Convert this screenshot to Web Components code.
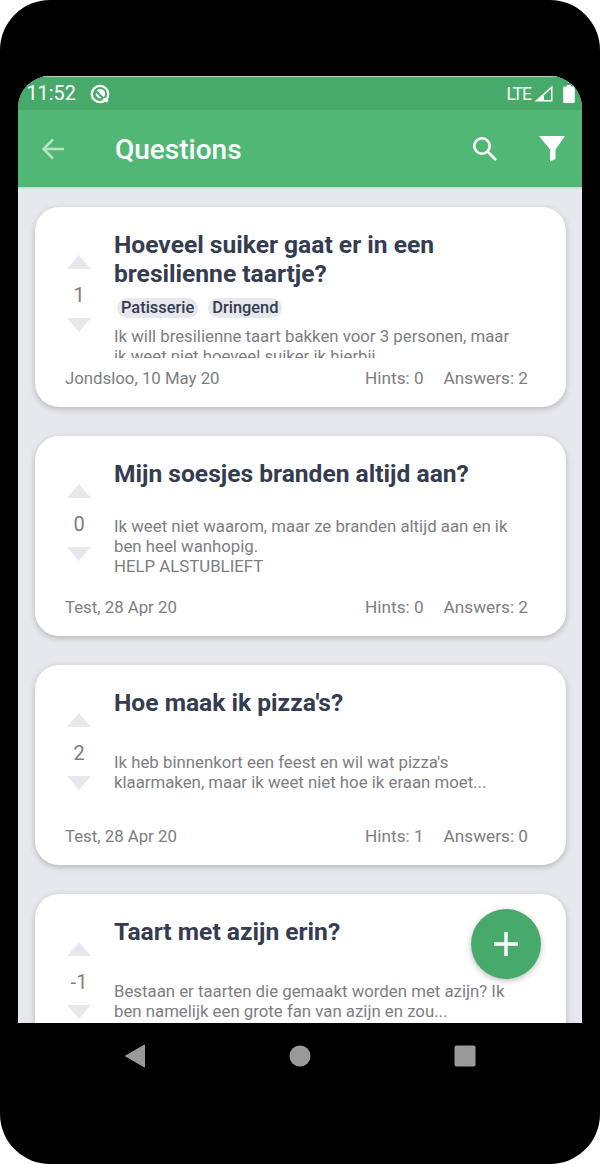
<!DOCTYPE html>
<html>
<head>
<meta charset="utf-8">
<title>Questions</title>
<style>
  html, body { margin: 0; padding: 0; background: #fff; }
  body { font-family: Roboto, "Liberation Sans", sans-serif; }
</style>
</head>
<body>
<phone-frame>
  <status-bar></status-bar>
  <app-bar title="Questions"></app-bar>
  <question-list>
    <question-card votes="1" title="Hoeveel suiker gaat er in een bresilienne taartje?" author="Jondsloo, 10 May 20" hints="0" answers="2">
      <tag-pill slot="tags">Patisserie</tag-pill>
      <tag-pill slot="tags">Dringend</tag-pill>
      Ik will bresilienne taart bakken voor 3 personen, maar ik weet niet hoeveel suiker ik hierbij
    </question-card>
    <question-card votes="0" title="Mijn soesjes branden altijd aan?" author="Test, 28 Apr 20" hints="0" answers="2">
      Ik weet niet waarom, maar ze branden altijd aan en ik ben heel wanhopig.<br>HELP ALSTUBLIEFT
    </question-card>
    <question-card votes="2" title="Hoe maak ik pizza's?" author="Test, 28 Apr 20" hints="1" answers="0" style="--text-shift: 7px">
      Ik heb binnenkort een feest en wil wat pizza's klaarmaken, maar ik weet niet hoe ik eraan moet...
    </question-card>
    <question-card votes="-1" title="Taart met azijn erin?" style="--text-shift: 7px">
      Bestaan er taarten die gemaakt worden met azijn? Ik ben namelijk een grote fan van azijn en zou...
    </question-card>
  </question-list>
  <add-button></add-button>
  <nav-bar slot="nav"></nav-bar>
</phone-frame>

<script>
class PhoneFrame extends HTMLElement {
    constructor() {
        super();
        this.attachShadow({ mode: 'open' });
        this.shadowRoot.innerHTML = `
        <style>
          :host {
            display: block;
            width: 600px;
            height: 1164px;
            box-sizing: border-box;
            padding-top: 76px;
            background: #000;
            border-radius: 50px;
            overflow: hidden;
          }
          .screen {
            position: relative;
            display: flex;
            flex-direction: column;
            width: 564px;
            height: 947px;
            margin: 0 18px;
            background: #e6e8ed;
            border-radius: 32px 32px 0 0;
            overflow: hidden;
          }
        </style>
        <div class="screen"><slot></slot></div>
        <slot name="nav"></slot>
      `;
    }
}

class StatusBar extends HTMLElement {
    constructor() {
        super();
        this.attachShadow({ mode: 'open' });
        this.shadowRoot.innerHTML = `
        <style>
          :host {
            display: flex;
            align-items: center;
            flex: none;
            height: 34px;
            box-sizing: border-box;
            padding: 0 7px 0 8.5px;
            background: #48aa6a;
            border-top: 1px solid #b4d9c0;
            color: #fff;
            font-size: 19.8px;
          }
          .at { margin-left: 14px; }
          .right { margin-left: auto; display: flex; align-items: center; }
          .lte { font-size: 17.5px; letter-spacing: -1px; margin-right: 3px; opacity: .95; }
          svg { display: block; }
        </style>
        <span class="time">11:52</span>
        <svg class="at" width="20" height="20" viewBox="0 0 20 20">
          <circle cx="10" cy="10" r="8.200" fill="none" stroke="#fff" stroke-width="2.300"/>
          <path d="M12 15.500l5 3.300 1.500-3-3.500-2z" fill="#fff"/>
          <path d="M6.800 6.400A4.800 4.800 0 0 1 13.700 13.300z" fill="#fff"/>
          <path d="M5.800 8.400l5.900 5.900A4.800 4.800 0 0 1 5.800 8.400z" fill="#fff"/>
        </svg>
        <div class="right">
          <span class="lte">LTE</span>
          <svg width="19" height="17" viewBox="0 0 19 17">
            <path d="M0.500 16.500L18.500 0.500v16z M10 15h7V4l-7 6.200z" fill="#fff" fill-rule="evenodd"/>
          </svg>
          <svg style="margin-left:10px" width="12" height="18" viewBox="0 0 12 18">
            <path d="M4 0h4v1.500h2.800a1 1 0 0 1 1 1V17a1 1 0 0 1-1 1H1.200a1 1 0 0 1-1-1V2.500a1 1 0 0 1 1-1H4z" fill="#fff"/>
          </svg>
        </div>
      `;
    }
}

class AppBar extends HTMLElement {
    constructor() {
        super();
        this.attachShadow({ mode: 'open' });
        this.shadowRoot.innerHTML = `
        <style>
          :host {
            display: flex;
            align-items: center;
            flex: none;
            height: 77px;
            padding: 0 17px 0 23px;
            background: #50b874;
            color: #fff;
            box-shadow: 0 1px 2px rgba(0, 0, 0, 0.12);
            z-index: 1;
          }
          h1 {
            margin: 2px 0 0 51px;
            font-size: 28px;
            font-weight: 500;
            line-height: 77px;
          }
          .icons { margin-left: auto; display: flex; align-items: center; gap: 41px; }
          svg { display: block; }
        </style>
        <svg width="23" height="24" viewBox="0 0 23 24" fill="none" stroke="#fff" stroke-opacity=".6" stroke-width="2.500">
          <path d="M23 12H2.500M12 2.500L2.500 12l9.500 9.500"/>
        </svg>
        <h1></h1>
        <div class="icons">
          <svg width="26" height="26" viewBox="0 0 26 26" fill="none" stroke="#fff" stroke-width="2.600">
            <circle cx="10" cy="10" r="7.700"/>
            <path d="M15.500 15.500L24 24"/>
          </svg>
          <svg width="26" height="26" viewBox="0 0 26 26">
            <path d="M0 0h26L16.500 13.500V23l-5.500 2.500V13.500z" fill="#fff"/>
          </svg>
        </div>
      `;
        this.shadowRoot.querySelector('h1').textContent = this.getAttribute('title');
    }
}

class QuestionList extends HTMLElement {
    constructor() {
        super();
        this.attachShadow({ mode: 'open' });
        this.shadowRoot.innerHTML = `
        <style>
          :host {
            display: flex;
            flex-direction: column;
            flex: 1;
            min-height: 0;
            gap: 29px;
            padding: 20px 16px 0 17px;
            overflow: hidden;
          }
        </style>
        <slot></slot>
      `;
    }
}

class QuestionCard extends HTMLElement {
    constructor() {
        super();
        this.attachShadow({ mode: 'open' });
        this.shadowRoot.innerHTML = `
        <style>
          :host {
            display: flex;
            flex-direction: column;
            flex: none;
            height: 200px;
            background: #fff;
            border-radius: 24px;
            box-shadow: 0 2px 6px rgba(0, 0, 0, 0.22);
          }
          .main {
            display: flex;
            height: 151px;
            overflow: hidden;
          }
          .votes {
            flex: none;
            width: 79px;
            box-sizing: border-box;
            padding: 48px 0 0 9px;
            text-align: center;
            color: #7d7d82;
            font-size: 20px;
          }
          .votes svg { display: block; margin: 0 auto; }
          .count { height: 49px; line-height: 52px; }
          .content { width: 404px; padding-top: 23px; }
          h2 {
            margin: 0;
            color: #353c50;
            font-size: 24.6px;
            font-weight: 700;
            line-height: 29px;
          }
          .tags {
            display: flex;
            gap: 10px;
            height: 20px;
            margin: 10px 0 8px 3px;
          }
          .tags.empty { height: 10px; }
          .text {
            padding-top: var(--text-shift, 0);
            color: #7d7d82;
            font-size: 16.8px;
            line-height: 20px;
          }
          .foot {
            display: flex;
            gap: 20px;
            padding: 10px 38px 0 30px;
            color: #7d7d82;
            font-size: 16.8px;
            line-height: 20px;
          }
          .foot[hidden] { display: none; }
          .author { margin-right: auto; }
          .hints, .answers { font-size: 17.2px; }
        </style>
        <div class="main">
          <div class="votes">
            <svg width="24" height="14" viewBox="0 0 24 14"><path d="M12 0l12 14H0z" fill="#e6e8ed"/></svg>
            <div class="count"></div>
            <svg width="24" height="14" viewBox="0 0 24 14"><path d="M0 0h24L12 14z" fill="#e6e8ed"/></svg>
          </div>
          <div class="content">
            <h2></h2>
            <div class="tags"><slot name="tags"></slot></div>
            <div class="text"><slot></slot></div>
          </div>
        </div>
        <div class="foot">
          <span class="author"></span>
          <span class="hints"></span>
          <span class="answers"></span>
        </div>
      `;
    }

    connectedCallback() {
        const root = this.shadowRoot;
        root.querySelector('.count').textContent = this.getAttribute('votes');
        root.querySelector('h2').textContent = this.getAttribute('title');
        if (this.hasAttribute('author')) {
            root.querySelector('.author').textContent = this.getAttribute('author');
            root.querySelector('.hints').textContent = `Hints: ${this.getAttribute('hints')}`;
            root.querySelector('.answers').textContent = `Answers: ${this.getAttribute('answers')}`;
        } else {
            // last card runs off the screen, its footer is never seen
            root.querySelector('.foot').hidden = true;
        }
        if (!this.querySelector('[slot=tags]')) {
            root.querySelector('.tags').classList.add('empty');
        }
    }
}

class TagPill extends HTMLElement {
    constructor() {
        super();
        this.attachShadow({ mode: 'open' });
        this.shadowRoot.innerHTML = `
        <style>
          :host {
            display: block;
            height: 20px;
            padding: 0 4px;
            background: #e6e8ed;
            border-radius: 10px;
            color: #353c50;
            font-size: 16.4px;
            font-weight: 500;
            line-height: 20px;
          }
        </style>
        <slot></slot>
      `;
    }
}

class AddButton extends HTMLElement {
    constructor() {
        super();
        this.attachShadow({ mode: 'open' });
        this.shadowRoot.innerHTML = `
        <style>
          :host {
            position: absolute;
            left: 453px;
            top: 833px;
            display: flex;
            align-items: center;
            justify-content: center;
            width: 70px;
            height: 70px;
            background: #48aa6a;
            border-radius: 50%;
            box-shadow: 0 2px 6px rgba(0, 0, 0, 0.25);
            z-index: 2;
          }
          svg { display: block; }
        </style>
        <svg width="24" height="24" viewBox="0 0 24 24"><path d="M10.300 0h3.400v10.300H24v3.400H13.700V24h-3.400V13.700H0v-3.400h10.300z" fill="#fff"/></svg>
      `;
    }
}

class NavBar extends HTMLElement {
    constructor() {
        super();
        this.attachShadow({ mode: 'open' });
        this.shadowRoot.innerHTML = `
        <style>
          :host {
            display: grid;
            grid-template-columns: repeat(3, 22px);
            justify-content: center;
            align-items: center;
            column-gap: 143px;
            height: 66px;
          }
          svg { display: block; }
        </style>
        <svg width="22" height="24" viewBox="0 0 22 24"><path d="M20.500 1v22L1.500 12z" fill="#9a9a9a" stroke="#9a9a9a" stroke-linejoin="round"/></svg>
        <svg width="22" height="22" viewBox="0 0 22 22"><circle cx="11" cy="11" r="10.500" fill="#9a9a9a"/></svg>
        <svg width="22" height="22" viewBox="0 0 22 22"><rect x="0.500" y="0.500" width="21" height="21" rx="2" fill="#9a9a9a"/></svg>
      `;
    }
}

customElements.define('phone-frame', PhoneFrame);
customElements.define('status-bar', StatusBar);
customElements.define('app-bar', AppBar);
customElements.define('question-list', QuestionList);
customElements.define('question-card', QuestionCard);
customElements.define('tag-pill', TagPill);
customElements.define('add-button', AddButton);
customElements.define('nav-bar', NavBar);
</script>
</body>
</html>
